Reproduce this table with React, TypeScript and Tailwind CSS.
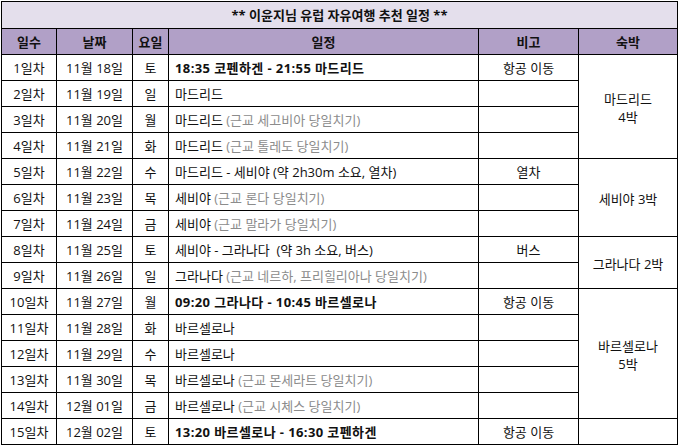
import React from 'react';

type Row = {
  day: string;
  date: string;
  dow: string;
  plan: string;
  sub?: string;
  bold?: boolean;
  note?: string;
};

const rows: Row[] = [
  { day: '1일차', date: '11월 18일', dow: '토', plan: '18:35 코펜하겐 - 21:55 마드리드', bold: true, note: '항공 이동' },
  { day: '2일차', date: '11월 19일', dow: '일', plan: '마드리드' },
  { day: '3일차', date: '11월 20일', dow: '월', plan: '마드리드', sub: '(근교 세고비아 당일치기)' },
  { day: '4일차', date: '11월 21일', dow: '화', plan: '마드리드', sub: '(근교 톨레도 당일치기)' },
  { day: '5일차', date: '11월 22일', dow: '수', plan: '마드리드 - 세비야 (약 2h30m 소요, 열차)', note: '열차' },
  { day: '6일차', date: '11월 23일', dow: '목', plan: '세비야', sub: '(근교 론다 당일치기)' },
  { day: '7일차', date: '11월 24일', dow: '금', plan: '세비야', sub: '(근교 말라가 당일치기)' },
  { day: '8일차', date: '11월 25일', dow: '토', plan: '세비야 - 그라나다  (약 3h 소요, 버스)', note: '버스' },
  { day: '9일차', date: '11월 26일', dow: '일', plan: '그라나다', sub: '(근교 네르하, 프리힐리아나 당일치기)' },
  { day: '10일차', date: '11월 27일', dow: '월', plan: '09:20 그라나다 - 10:45 바르셀로나', bold: true, note: '항공 이동' },
  { day: '11일차', date: '11월 28일', dow: '화', plan: '바르셀로나' },
  { day: '12일차', date: '11월 29일', dow: '수', plan: '바르셀로나' },
  { day: '13일차', date: '11월 30일', dow: '목', plan: '바르셀로나', sub: '(근교 몬세라트 당일치기)' },
  { day: '14일차', date: '12월 01일', dow: '금', plan: '바르셀로나', sub: '(근교 시체스 당일치기)' },
  { day: '15일차', date: '12월 02일', dow: '토', plan: '13:20 바르셀로나 - 16:30 코펜하겐', bold: true, note: '항공 이동' },
];

// 숙박 column, keyed by the row index where the merged cell starts
const stays: Record<number, { span: number; lines: string[] }> = {
  0: { span: 4, lines: ['마드리드', '4박'] },
  4: { span: 3, lines: ['세비야 3박'] },
  7: { span: 2, lines: ['그라나다 2박'] },
  9: { span: 5, lines: ['바르셀로나', '5박'] },
  14: { span: 1, lines: [] },
};

const cell = 'border border-black px-0 pt-[2px] text-center whitespace-nowrap';

const App = () => {
  return (
    <div
      className="bg-white w-[678px] h-[447px] pt-px pl-px text-[13px] text-[#111] overflow-hidden"
      style={{ fontFamily: '"Open Sans", "Noto Sans CJK KR", sans-serif' }}
    >
      <table className="table-fixed border-collapse w-[676px]">
        <colgroup>
          <col className="w-[55px]" />
          <col className="w-[76px]" />
          <col className="w-[36px]" />
          <col className="w-[310px]" />
          <col className="w-[100px]" />
          <col className="w-[99px]" />
        </colgroup>
        <tbody>
          <tr className="h-[27px] bg-[#e4dfec]">
            <td colSpan={6} className={`${cell} font-bold`}>
              ** 이윤지님 유럽 자유여행 추천 일정 **
            </td>
          </tr>
          <tr className="h-[26px] bg-[#b1a0c7] font-bold">
            <td className={cell}>일수</td>
            <td className={cell}>날짜</td>
            <td className={cell}>요일</td>
            <td className={cell}>일정</td>
            <td className={cell}>비고</td>
            <td className={cell}>숙박</td>
          </tr>
          {rows.map((r, i) => (
            <tr key={r.day} className="h-[26px]">
              <td className={cell}>{r.day}</td>
              <td className={cell}>{r.date}</td>
              <td className={cell}>{r.dow}</td>
              <td
                className={`${cell} text-left pl-[6px] whitespace-pre ${
                  r.bold ? 'font-bold tracking-[0.4px]' : ''
                }`}
              >
                {r.plan}
                {r.sub && <span className="text-[#8c8c8c]"> {r.sub}</span>}
              </td>
              <td className={cell}>{r.note}</td>
              {stays[i] && (
                <td rowSpan={stays[i].span} className={`${cell} leading-[18px]`}>
                  {stays[i].lines.map((l) => (
                    <div key={l}>{l}</div>
                  ))}
                </td>
              )}
            </tr>
          ))}
        </tbody>
      </table>
    </div>
  );
};

export default App;
